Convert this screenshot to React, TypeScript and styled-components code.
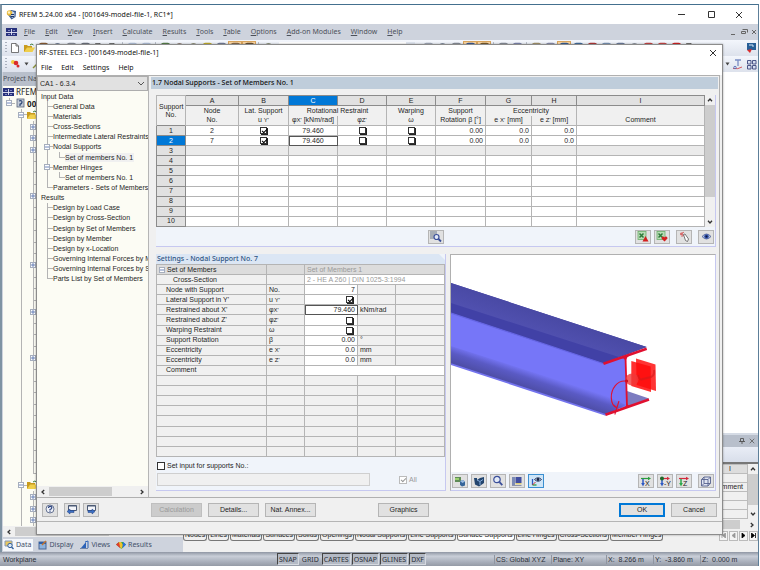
import React from "react";
import styled, { createGlobalStyle, css } from "styled-components";

const ui = '"Noto Sans", "Open Sans", sans-serif';
const small = '"Liberation Sans", Arial, sans-serif';

const Global = createGlobalStyle`
  * { box-sizing: border-box; }
  body { margin: 0; background: #fff; color: #1e1e1e; font: 7px/9px ${small}; }
  button, input, select { font: inherit; color: inherit; margin: 0; padding: 0; border-radius: 0; }
  ul { list-style: none; margin: 0; padding: 0; }
  svg { display: block; flex: none; }
`;

/* ---------- main window ---------- */

const Screen = styled.div`
  position: relative;
  display: flex;
  height: 100vh;
  padding: 4px 1px 4px 0;
  overflow: hidden;
`;
const MainWindow = styled.div`
  flex: 1;
  min-width: 0;
  display: flex;
  flex-direction: column;
  border-top: 1px solid #44708f;
  border-left: 2px solid #7f93a3;
  border-right: 1px solid #5d7f99;
`;
const TitleBar = styled.header`
  display: flex;
  align-items: center;
  height: 19px;
  padding: 0 6px 0 4px;
  gap: 2px;
  font: 7px/12px ${ui};
  color: #111;
  background: #fff;
`;
const Spacer = styled.span`
  flex: 1;
`;
const WinButton = styled.button<{ $w?: number }>`
  display: grid;
  place-items: center;
  width: ${(p) => p.$w ?? 29}px;
  height: 12px;
  border: 0;
  background: none;
  color: #333;
`;
const MenuBar = styled.nav`
  display: flex;
  align-items: center;
  height: 16px;
  padding-left: 4px;
  gap: 10px;
  font: 7px/12px ${ui};
  color: #4c5058;
  background: #ced3dd;
  & > svg:first-child { margin-right: -3px; }
`;
const MenuItem = styled.button`
  border: 0;
  background: none;
  &::first-letter { text-decoration: underline; }
`;
const ToolRow = styled.div`
  display: flex;
  align-items: center;
  height: 16px;
  padding-left: 1px;
  background: linear-gradient(#f3f6fc, #dde2ec);
  overflow: hidden;
`;
const ToolSlot = styled.button<{ $on?: boolean; $w?: number }>`
  display: grid;
  place-items: center;
  flex: none;
  width: ${(p) => p.$w ?? 14}px;
  height: 14px;
  padding: 0;
  border: 1px solid ${(p) => (p.$on ? "#d9a45c" : "transparent")};
  background: ${(p) => (p.$on ? "#fbd6a2" : "none")};
`;
const Grip = styled.span`
  flex: none;
  width: 2px;
  height: 12px;
  margin: 0 1px 0 2px;
  background: repeating-linear-gradient(#a9b0bd 0 1px, transparent 1px 3px);
`;
const Separator = styled.span`
  flex: none;
  width: 1px;
  height: 12px;
  margin: 0 2px;
  background: #b9bfca;
`;
const ToolCombo = styled.select`
  appearance: none;
  width: 136px;
  height: 12px;
  margin: 0 6px 0 4px;
  border: 0;
  border-right: 9px solid #dfe5ef;
  background: #fff;
`;
const Work = styled.div`
  flex: 1;
  min-height: 0;
  display: grid;
  grid-template-columns: 181px 1fr;
`;
const Navigator = styled.aside`
  display: flex;
  flex-direction: column;
  min-height: 0;
  padding-left: 1px;
  background: #ced3dd;
`;
const NavHeader = styled.div`
  height: 14px;
  font: 7px/14px ${ui};
  color: #4a4d55;
  background: #b8bfcb;
`;
const NavTree = styled.ul`
  flex: 1;
  min-height: 0;
  display: grid;
  grid-auto-rows: 1fr;
  background: #fcfcf4;
  font: 8px/11px ${ui};
`;
const NavRow = styled.li`
  display: flex;
  align-items: center;
  min-height: 0;
  overflow: hidden;
`;
const line = "linear-gradient(#b4b4b4,#b4b4b4)";
const Rail = styled.span<{ $dash?: boolean; $line?: boolean; $end?: boolean }>`
  display: grid;
  align-self: stretch;
  align-items: center;
  justify-items: start;
  flex: none;
  width: 12px;
  padding-left: 3px;
  background:
    ${line} 6px 50% / ${(p) => (p.$dash ? "6px 1px" : "0 0")} no-repeat,
    ${line} 6px 0 / ${(p) => (p.$line ? "1px" : "0")} ${(p) => (p.$end ? "50%" : "100%")} no-repeat;
`;
const Toggle = styled.button`
  display: grid;
  place-items: center;
  width: 6px;
  height: 6px;
  border: 1px solid #a6aebd;
  background: #fff;
`;
const NavTabs = styled.div`
  display: flex;
  align-items: center;
  height: 15px;
  gap: 4px;
  font: 7px/12px ${ui};
  color: #42506a;
`;
const NavTab = styled.button<{ $on?: boolean }>`
  display: flex;
  align-items: center;
  gap: 2px;
  height: 12px;
  padding: 0 1px;
  border: 0;
  background: ${(p) => (p.$on ? "#f4f7fb" : "none")};
`;
const Viewport = styled.main`
  min-width: 0;
  display: flex;
  flex-direction: column;
  background: #fff;
`;
const Dock = styled.section`
  margin-top: auto;
  display: flex;
  flex-direction: column;
  border-top: 2px solid #d5dbe5;
  background: #f0f0f0;
`;
const DockHeader = styled.div`
  display: flex;
  justify-content: flex-end;
  align-items: center;
  gap: 4px;
  height: 12px;
  padding-right: 3px;
  color: #555;
  background: #b8bfcb;
`;
const DockTools = styled.div`
  height: 17px;
  background: linear-gradient(#e9edf6, #d8deea);
  border-bottom: 2px solid #777;
`;
const DockSheet = styled.div`
  display: grid;
  grid-template-columns: 1fr 10px;
`;
const SheetTable = styled.table`
  width: 100%;
  border-collapse: collapse;
  background: #f0f0f0;
  th, td { height: 9px; padding: 0; border: 1px solid #bcbcbc; font-weight: 400; text-align: right; line-height: 8px; }
  th { background: #ddd; padding-right: 16px; }
  td { padding-right: 4px; }
`;
const SheetTabs = styled.div`
  display: flex;
  align-items: center;
  gap: 1px;
  height: 11px;
`;
const SheetTab = styled.button<{ $on?: boolean }>`
  height: 10px;
  padding: 0 1px;
  border: 1px solid #777;
  border-top: 0;
  border-radius: 0 0 3px 3px;
  background: ${(p) => (p.$on ? "#fff" : "#f0f0f0")};
  line-height: 8px;
  white-space: nowrap;
`;
const PageButton = styled.button`
  display: grid;
  place-items: center;
  width: 9px;
  height: 10px;
  border: 1px solid #bbb;
  background: #f4f4f4;
`;
const DockFoot = styled.div`
  height: 11px;
`;
const StatusBar = styled.footer`
  display: flex;
  align-items: center;
  height: 14px;
  margin-left: -2px;
  padding: 0 3px;
  background: linear-gradient(#8f96a3, #c9ced8 30%, #a9afbb 70%, #959ba6);
  color: #2b2f38;
`;
const StatusButtons = styled.div`
  display: flex;
  flex: 1;
  margin-left: 32%;
  gap: 1px;
`;
const StatusToggle = styled.button<{ $up?: boolean }>`
  height: 12px;
  padding: 0 1px;
  border: 1px solid;
  border-color: ${(p) => (p.$up ? "transparent" : "#444 #d5d9e0 #d5d9e0 #444")};
  background: ${(p) => (p.$up ? "none" : "#b4bac5")};
  font: 7px/9px ${ui};
`;
const StatusText = styled.span<{ $w: number }>`
  width: ${(p) => p.$w}px;
  padding-left: 1px;
  border-left: 1px solid #8f95a1;
  white-space: nowrap;
`;

/* ---------- scrollbars ---------- */

const HScroll = styled.div`
  display: grid;
  grid-template-columns: 12px 1fr 12px;
  align-items: center;
  justify-items: center;
  height: 11px;
  background: #f0f0f0;
`;
const HTrack = styled.div`
  width: 100%;
  height: 9px;
  display: flex;
`;
const HThumb = styled.div<{ $size: number }>`
  width: ${(p) => p.$size}%;
  background: #cdcdcd;
`;
const VScroll = styled.div`
  display: flex;
  flex-direction: column;
  align-items: center;
  background: #f0f0f0;
`;
const VThumb = styled.div<{ $size: number }>`
  width: 100%;
  flex: ${(p) => p.$size};
  background: #cdcdcd;
`;
const VRest = styled.div<{ $size: number }>`
  flex: ${(p) => p.$size};
`;
const ScrollArrow = styled.button`
  display: grid;
  place-items: center;
  width: 10px;
  height: 10px;
  border: 0;
  background: none;
`;

/* ---------- dialog ---------- */

const Dialog = styled.div`
  position: absolute;
  top: 44px;
  left: 36px;
  right: 37px;
  bottom: 35px;
  display: flex;
  flex-direction: column;
  border: 1px solid #8c8c8c;
  background: #f0f0f0;
  box-shadow: 0 0 2px rgba(0, 0, 0, 0.35);
`;
const DialogTitle = styled.div`
  display: flex;
  align-items: center;
  height: 15px;
  padding: 1px 0 0 2px;
  background: #fff;
  font: 7px/12px ${ui};
  color: #111;
`;
const DialogMenu = styled.nav`
  display: flex;
  align-items: center;
  height: 15px;
  padding-left: 4px;
  gap: 9px;
  background: #fff;
  font: 7px/12px ${ui};
  color: #111;
`;
const PlainItem = styled.button`
  border: 0;
  background: none;
`;
const DialogBody = styled.div`
  flex: 1;
  min-height: 0;
  display: grid;
  grid-template-columns: 112px minmax(0, 1fr);
  margin-right: 2px;
  border: 1px solid #b0b0b0;
  border-left: 0;
`;
const Side = styled.div`
  display: flex;
  flex-direction: column;
  min-width: 0;
  min-height: 0;
  border-right: 1px solid #b5b5b5;
  background: #fcfcf4;
`;
const CaseSelect = styled.select`
  appearance: none;
  width: 100%;
  height: 15px;
  padding-left: 2px;
  border: 1px solid #adadad;
  background:
    linear-gradient(45deg, transparent 45%, #555 45%, #555 58%, transparent 58%) right 6px top 5px / 3px 3px no-repeat,
    linear-gradient(-45deg, transparent 45%, #555 45%, #555 58%, transparent 58%) right 3px top 5px / 3px 3px no-repeat,
    #e1e1e1;
`;
const Tree = styled.ul`
  display: grid;
  grid-auto-rows: 1fr;
  height: 193px;
  padding-left: 4px;
  overflow: hidden;
`;
const TreeRow = styled.li`
  display: flex;
  align-items: center;
  min-height: 0;
  white-space: nowrap;
`;
const TreeLabel = styled.span<{ $on?: boolean }>`
  line-height: 9px;
  padding-right: 1px;
  background: ${(p) => (p.$on ? "#f0f0f0" : "none")};
`;
const Page = styled.div`
  display: flex;
  flex-direction: column;
  min-width: 0;
  padding: 1px 1px 6px 2px;
`;
const PageTitle = styled.h1`
  margin: 0;
  height: 12px;
  padding-left: 1px;
  font: 500 7px/12px ${ui};
  color: #111;
  background: #bfcddb;
`;
const GridPanel = styled.section`
  margin: 6px 2px 7px 5px;
  border: 1px solid #c6c8f0;
  border-width: 0 1px 1px 0;
  background: #f0f4fa;
`;
const GridWrap = styled.div`
  display: grid;
  grid-template-columns: minmax(0, 1fr) 10px;
`;
const GridTable = styled.table`
  width: 100%;
  height: 132px;
  table-layout: fixed;
  border-collapse: collapse;
  background: #fff;
  th, td {
    padding: 0 2px;
    border: 1px solid #b4b4b4;
    font-weight: 400;
    line-height: 8px;
    height: 10px;
    text-align: center;
    white-space: nowrap;
  }
  thead th { background: #f0f0f0; }
`;
const Letter = styled.th<{ $on?: boolean }>`
  && {
    background: ${(p) => (p.$on ? "#0078d7" : "#e1e1e1")};
    color: ${(p) => (p.$on ? "#fff" : "inherit")};
    border-color: #8b8b8b;
  }
`;
const Upper = styled.th`
  && { border-bottom: 0; }
`;
const Lower = styled.th`
  && { border-top: 0; padding: 0; }
`;
const RowHead = styled.th<{ $on?: boolean }>`
  && {
    background: ${(p) => (p.$on ? "#0078d7" : "#e1e1e1")};
    color: ${(p) => (p.$on ? "#fff" : "inherit")};
    border: 1px solid #8b8b8b;
  }
`;
const Cell = styled.td<{ $right?: boolean; $focus?: boolean; $dim?: boolean }>`
  && {
    ${(p) => p.$right && css`text-align: right;`}
    ${(p) => p.$dim && css`background: #ebebeb;`}
    ${(p) => p.$focus && css`outline: 1px solid #555; outline-offset: -1px;`}
  }
`;
const GridTools = styled.div`
  display: flex;
  align-items: center;
  gap: 3px;
  height: 19px;
  padding: 0 1px;
`;
const MidTools = styled.div`
  flex: 1;
  display: grid;
  place-items: center;
`;
const IconButton = styled.button<{ $on?: boolean; $gap?: number }>`
  display: grid;
  place-items: center;
  width: 16px;
  height: 14px;
  margin-left: ${(p) => p.$gap ?? 0}px;
  border: 1px solid ${(p) => (p.$on ? "#3c8fd0" : "#b5b5b5")};
  background: ${(p) => (p.$on ? "#cfe5f7" : "#e1e1e1")};
`;
const Lowers = styled.div`
  flex: 1;
  min-height: 0;
  display: grid;
  grid-template-columns: 290px minmax(0, 1fr);
  gap: 4px;
  margin: 0 2px 0 5px;
`;
const Settings = styled.section`
  display: flex;
  flex-direction: column;
  border: 1px solid #c6c8f0;
  border-width: 0 1px 1px 0;
  background: #f0f4fa;
`;
const SettingsTitle = styled.h2`
  margin: 0;
  height: 10px;
  padding-left: 1px;
  font: 500 7px/10px ${ui};
  color: #2d5382;
  background: #dbe6f4;
  clip-path: polygon(0 0, calc(100% - 6px) 0, 100% 6px, 100% 100%, 0 100%);
`;
const PropTable = styled.table`
  width: 100%;
  height: 193px;
  table-layout: fixed;
  border-collapse: collapse;
  background: #f0f0f0;
  td, th {
    height: 10px;
    padding: 0 2px;
    border: 1px solid #b4b4b4;
    font-weight: 400;
    line-height: 8px;
    text-align: left;
    white-space: nowrap;
  }
  th { padding-left: 9px; }
`;
const PropHead = styled.th`
  && { padding-left: 2px; background: #dcdcdc; }
`;
const HeadRest = styled.td`
  && { background: #dcdcdc; color: #9a9a9a; }
`;
const SubHead = styled.th`
  && { padding-left: 16px; }
`;
const Value = styled.td<{ $gray?: boolean; $left?: boolean; $focus?: boolean }>`
  && {
    background: #fff;
    text-align: ${(p) => (p.$left ? "left" : "right")};
    color: ${(p) => (p.$gray ? "#9a9a9a" : "inherit")};
    ${(p) => p.$focus && css`outline: 1px solid #555; outline-offset: -1px;`}
  }
`;
const Folded = styled.span`
  display: flex;
  align-items: center;
  gap: 2px;
`;
const SetInput = styled.div`
  display: flex;
  flex-direction: column;
  gap: 3px;
  padding: 4px 0 0 1px;
`;
const InputRow = styled.div`
  display: flex;
  align-items: center;
`;
const CheckLabel = styled.label<{ $gray?: boolean; $gap?: number }>`
  display: flex;
  align-items: center;
  gap: 2px;
  margin-left: ${(p) => p.$gap ?? 0}px;
  color: ${(p) => (p.$gray ? "#9a9a9a" : "inherit")};
`;
const NumberField = styled.input`
  width: 213px;
  height: 13px;
  border: 1px solid #cfcfcf;
  background: #f0f0f0;
`;
const Box = styled.input<{ $cell?: "center" | "right"; $gray?: boolean }>`
  appearance: none;
  display: block;
  width: 8px;
  height: 8px;
  border: 1px solid ${(p) => (p.$gray ? "#bbb" : "#333")};
  background: #fff;
  ${(p) =>
    p.$cell &&
    css`
      width: 7px;
      height: 7px;
      box-shadow: 1px 1px 0 #222;
      margin: 0 ${p.$cell === "right" ? "2px" : "auto"} 0 auto;
    `}
  &:checked::after {
    content: "";
    display: block;
    width: 4px;
    height: 2px;
    margin: 1px 0 0 1px;
    border: solid ${(p) => (p.$gray ? "#999" : "#000")};
    border-width: 0 0 1px 1px;
    transform: rotate(-45deg);
  }
`;
const Sub = styled.span`
  font-size: 6px;
`;
const Preview = styled.section`
  display: flex;
  flex-direction: column;
  border: 1px solid #c6c8f0;
  border-top-color: #b0b0b0;
  border-left-color: #b0b0b0;
  background: #fff;
  svg.beam { flex: 1; width: 100%; min-height: 0; }
`;
const PreviewTools = styled.div`
  display: flex;
  align-items: center;
  gap: 3px;
  height: 18px;
  padding: 0 1px;
  background: #f0f4fa;
`;
const Footer = styled.div`
  display: flex;
  align-items: center;
  height: 24px;
  padding: 0 5px;
  border-bottom: 1px solid #b5b5b5;
`;
const HelpButtons = styled.div`
  display: flex;
  gap: 3px;
  width: 109px;
`;
const PushButton = styled.button<{ $w?: number; $gap?: number; $primary?: boolean }>`
  width: ${(p) => p.$w ?? 51}px;
  height: 14px;
  margin-left: ${(p) => p.$gap ?? 6}px;
  border: ${(p) => (p.$primary ? "2px solid #0078d7" : "1px solid #b5b5b5")};
  background: #e1e1e1;
  line-height: 9px;
  &:disabled { color: #9a9a9a; background: #ccc; border-color: #bfbfbf; }
`;
const DialogStatus = styled.div`
  height: 12px;
`;

/* ---------- drawings ---------- */

const Chevron = ({ d }: { d: string }) => (
  <svg width="6" height="6" viewBox="0 0 6 6" fill="none" stroke="#333" strokeWidth="1.3"><path d={d} /></svg>
);
const LEFT = "M4.2 1 2 3l2.200 2";
const RIGHT = "M1.800 1 4 3 1.800 5";
const UP = "M1 4.200 3 2l2 2.200";
const DOWN = "M1 1.800 3 4l2-2.200";

const Cross = ({ s = 8, c = "#333" }: { s?: number; c?: string }) => (
  <svg width={s} height={s} viewBox="0 0 8 8" stroke={c} strokeWidth="1"><path d="M1 1l6 6M7 1 1 7" /></svg>
);
const Logo = () => (
  <svg width="11" height="11" viewBox="0 0 11 11">
    <path d="M1 4.500 5 1l5 1-.5 6-4 2.500z" fill="#38598f" />
    <path d="M3 3.500 6 2l2.500 1.500v4L6 9z" fill="#c7d4e8" />
    <circle cx="3.500" cy="4" r="2.700" fill="#e6b93c" /><circle cx="3" cy="3.500" r="1.200" fill="#fff3bd" />
    <path d="M5 5.500h3M5 7.500h3" stroke="#1f3566" strokeWidth="1" />
  </svg>
);
const Flag = () => (
  <svg width="11" height="8" viewBox="0 0 11 8">
    <rect width="11" height="8" fill="#27317c" />
    <path d="M0 4.500h11M5.500 1v6" stroke="#e5e8f5" strokeWidth=".9" />
    <path d="M2 2.500h2M7 2.500h2M2 6.500h2M7 6.500h2" stroke="#aab2dc" strokeWidth=".7" />
  </svg>
);
const Folder = () => (
  <svg width="11" height="10" viewBox="0 0 11 10">
    <path d="M0 9V2h3l1 1h4v2" fill="#c99b1e" /><path d="M0 9 3 4.500h8L8.500 9z" fill="#efcf4d" />
    <path d="M6 2q2-2 3.500 0" stroke="#3a7a3a" fill="none" />
  </svg>
);
const PageIcon = ({ c = "#fff" }: { c?: string }) => (
  <svg width="10" height="12" viewBox="0 0 10 12"><path d="M1.500 1.500h4.500l2.500 2.500v6.500h-7z" fill={c} stroke="#555" strokeWidth=".8" /><path d="M6 1.500V4h2.500" fill="none" stroke="#555" strokeWidth=".8" /></svg>
);
const Blob = ({ c }: { c: string }) => (
  <svg width="11" height="12" viewBox="0 0 11 12"><rect x="1.500" y="1.500" width="8" height="8" rx="2" fill="none" stroke={c} strokeWidth="1.500" /><path d="M3 4h5M3 6.500h5" stroke={c} /></svg>
);
const Disc = ({ c }: { c: string }) => (
  <svg width="11" height="12" viewBox="0 0 11 12"><circle cx="5.500" cy="5.500" r="4" fill={c} stroke="#56606e" strokeWidth=".7" /></svg>
);
const Nodes = () => (
  <svg width="11" height="10" viewBox="0 0 11 10"><circle cx="3" cy="3" r="2" fill="#f3cb3c" /><circle cx="6" cy="4" r="2.300" fill="#d92c2c" /><circle cx="8" cy="7" r="1.500" fill="#d92c2c" /></svg>
);
const Wand = () => (
  <svg width="11" height="10" viewBox="0 0 11 10"><path d="M1 9 7 3" stroke="#8a8f3a" strokeWidth="1.500" /><path d="M5 1l4 4M9 1 6 4" stroke="#c7bf31" /></svg>
);
const Caret = () => (
  <svg width="5" height="4" viewBox="0 0 5 4"><path d="M.5.5h4L2.500 3.500z" fill="#444" /></svg>
);
const BeamTool = () => (
  <svg width="11" height="11" viewBox="0 0 11 11" fill="none"><path d="M3 1h6M6 1v6" stroke="#7a8dc4" strokeWidth="1.300" /><path d="M1 9.500q5 1 9-1.500" stroke="#d4585f" /><circle cx="3" cy="8.500" r="1.200" stroke="#5b71bb" /></svg>
);
const WindowsTool = () => (
  <svg width="11" height="11" viewBox="0 0 11 11" fill="#d7def0" stroke="#4c5788"><path d="M1.500 1.500h3.500v3.500H1.500zM6.500 1.500H10v3.500H6.500zM1.500 6.500h3.500V10H1.500zM6.500 6.500H10V10H6.500z" /></svg>
);
const BlueTool = () => (
  <svg width="11" height="12" viewBox="0 0 11 12"><rect x="1" y="1" width="9" height="7" fill="#265e96" /><path d="M3 3h4v2" stroke="#cfe3f5" fill="none" /><path d="M1 8l3 3 2-4z" fill="#d92c2c" /></svg>
);
const Model = () => (
  <svg width="10" height="10" viewBox="0 0 10 10"><rect x="2" y="1" width="7" height="8" fill="#c3cbd8" stroke="#59647a" strokeWidth=".8" /><path d="M4 3q3-1 3 1t-2 2v2" stroke="#2d4675" fill="none" strokeWidth="1.200" /></svg>
);
const TabIcon = ({ kind }: { kind: string }) => (
  <svg width="10" height="10" viewBox="0 0 10 10" fill="none">
    {kind === "Data" && <><path d="M1 1h7v5H1z" fill="#e8c860" stroke="#8497b5" /><circle cx="6" cy="5.500" r="2.200" fill="#d7e6f5" stroke="#36629c" /><path d="m7.500 7 2 2" stroke="#36629c" strokeWidth="1.400" /></>}
    {kind === "Display" && <><rect x="1" y="2" width="7" height="7" fill="#8eb3dd" stroke="#4a6795" /><path d="M1 3h7" stroke="#2f60a8" strokeWidth="2" /><path d="m4 5 4-4" stroke="#c7752c" strokeWidth="1.500" /></>}
    {kind === "Views" && <><path d="M1 8.500h8" stroke="#7285a8" /><path d="m2 8 5-6v6z" fill="#2c62b8" /><path d="m6 2 3-1v7" stroke="#2c62b8" /></>}
    {kind === "Results" && <><path d="M0 4.500 3 2l4 0 3 2.500L5.500 9z" fill="#34a853" /><path d="M0 4.500 3 2l2 2.500L4 8z" fill="#e33a2c" /><path d="M3 2h2l2 3-1.500 4L4 7z" fill="#f1c22c" /><path d="m7 2 3 2.500L6.500 8z" fill="#2b6de0" /></>}
  </svg>
);
const Excel = ({ up }: { up?: boolean }) => (
  <svg width="12" height="11" viewBox="0 0 12 11">
    <rect x="1" y=".5" width="8" height="8" fill="#b9dcb6" stroke="#6bae6c" strokeWidth=".8" /><path d="m2.500 2.500 4 4M6.500 2.500l-4 4" stroke="#2f7a3a" strokeWidth="1.500" />
    <path d={up ? "M5.500 10.500h6L8.500 5z" : "M8.500 10.500 5.500 7.500q0-2 1.500-2 1 0 1.500 1 .5-1 1.500-1 1.500 0 1.500 2z"} fill="#d41f1f" />
  </svg>
);
const Pick = () => (
  <svg width="11" height="11" viewBox="0 0 11 11" fill="none"><path d="M3 1v5M1 2l4 3M5 1 1 4" stroke="#d34a4a" strokeWidth=".8" /><path d="m4.500 3.500 1.500-.5 3.500 5-1 2.500-2-1z" fill="#fff" stroke="#555" strokeWidth=".8" /></svg>
);
const EyeIcon = () => (
  <svg width="11" height="9" viewBox="0 0 11 9"><path d="M1 4.500q4.500-5 9 0-4.500 5-9 0z" fill="#b8c7e6" stroke="#3c4f88" strokeWidth=".7" /><circle cx="5.500" cy="4.500" r="2.300" fill="#2f4ea6" /><circle cx="5.500" cy="4.500" r="1" fill="#0b1538" /></svg>
);
const Lens = ({ boxed }: { boxed?: boolean }) => (
  <svg width="12" height="12" viewBox="0 0 12 12" fill="none">
    {boxed && <path d="M0 0h7v8H0z" fill="#a7adb5" />}
    <circle cx={boxed ? 6.5 : 5} cy={boxed ? 6 : 4.5} r={boxed ? 2.5 : 3.2} fill="#e3eaf7" stroke="#3a4f9a" strokeWidth="1.200" />
    <path d={boxed ? "m8.500 8 2.500 2.500" : "m7.500 7.200 2.800 3"} stroke="#3a4f9a" strokeWidth="1.800" />
  </svg>
);
const Shade = () => (
  <svg width="12" height="11" viewBox="0 0 12 11"><path d="M1 1h6v5H1z" fill="#5f8c57" /><path d="M1 2h4v2H1z" fill="#9bd06f" /><path d="m6 5 3-1 2 1.500v4L8 10.500 6 9z" fill="#35659a" /><path d="m6 5 3-1 2 1.500L8.500 7z" fill="#9bbce0" /></svg>
);
const Solid = () => (
  <svg width="12" height="11" viewBox="0 0 12 11"><path d="M1 2h3v2l3-2 4-1v6L6 10.500 2 8.500z" fill="#23456f" /><path d="m4 4 3 1.500L10 3.500M7 5.500V9" stroke="#87aede" fill="none" /></svg>
);
const Panes = () => (
  <svg width="12" height="11" viewBox="0 0 12 11"><path d="M1 1h3v8H1z" fill="#7c8bb5" /><path d="M4.500 1h6v6h-6z" fill="#414fa0" /><path d="M4.500 7.800h6" stroke="#d9c24b" /><path d="M1 9.500h9.500" stroke="#8a93ad" /></svg>
);
const AxesEye = () => (
  <svg width="12" height="11" viewBox="0 0 12 11" fill="none"><path d="M2.500 3v6" stroke="#2b58c4" strokeWidth="1.300" /><path d="M2.500 9h4" stroke="#2a9d3f" strokeWidth="1.300" /><path d="m2.500 9 3-3" stroke="#d33" /><path d="M4.500 3.500q3.500-3.500 7 0-3.500 3.500-7 0z" fill="#cfd9ee" stroke="#2f3f66" /><circle cx="8" cy="3.500" r="1.400" fill="#16233f" /></svg>
);
const AxisX = ({ a, v, c, h, n }: { a?: boolean; v: string; c?: string; h: string; n: string }) => (
  <svg width="12" height="11" viewBox="0 0 12 11" fill="none">
    <path d="M1 2.500h8" stroke={h} strokeWidth="1.200" /><path d="m8 .8 3 1.700-3 1.700z" fill={h} />
    <path d="M3 3v5" stroke={v} strokeWidth="1.500" /><path d="M1.200 7 3 10.500 4.800 7z" fill={v} />
    {a && <circle cx="3" cy="2.500" r="2" fill={c} />}
    <text x="5" y="10" fontFamily="Liberation Sans" fontSize="7" fill="#222">{n}</text>
  </svg>
);
const Cube = () => (
  <svg width="12" height="11" viewBox="0 0 12 11" fill="#dfe4f2" stroke="#56628e" strokeWidth=".9"><path d="M1.500 3.500 4 1h6.500v6L8 10H1.500zM1.500 3.500H8V10M8 3.500 10.500 1M4 1v6.500h6.500M4 7.500 1.500 10" /></svg>
);
const Help = () => (
  <svg width="12" height="11" viewBox="0 0 12 11" fill="none"><circle cx="6" cy="5" r="4" fill="#eef1f8" stroke="#6a7694" /><path d="M4.500 4q0-1.700 1.700-1.700T7.800 4Q7.600 5 6 5.500v1M6 7.300v1" stroke="#2c4380" strokeWidth="1.200" /></svg>
);
const Step = ({ back }: { back?: boolean }) => (
  <svg width="12" height="11" viewBox="0 0 12 11" fill="none"><path d="M2.500 1.500h8v5h-8z" fill="#f3f5fa" stroke="#4c5a75" /><path d="M2.500 2h8" stroke="#4c5a75" /><path d={back ? "M1 7.500 4 5v1.500h4v2H4V10z" : "M10 7.500 7 5v1.500H3v2h4V10z"} fill="#3c6fc4" stroke="#1e3f80" strokeWidth=".5" /></svg>
);

const Beam = () => (
  <svg className="beam" viewBox="0 0 264 217" preserveAspectRatio="xMinYMid meet" role="img" aria-label="Beam with nodal support">
    <defs>
      <linearGradient id="foot" gradientUnits="userSpaceOnUse" x1="80" y1="116" x2="73" y2="137">
        <stop offset="0" stopColor="#7676f6" /><stop offset=".35" stopColor="#5a5ac4" /><stop offset="1" stopColor="#484898" />
      </linearGradient>
      <linearGradient id="roof" gradientUnits="userSpaceOnUse" x1="100" y1="60" x2="92" y2="84">
        <stop offset="0" stopColor="#4949a4" /><stop offset="1" stopColor="#5252b2" />
      </linearGradient>
    </defs>
    <path d="M176 136 198 143.500 176 152z" fill="#7c7cc0" />
    <path d="M0 56 153 106 174 101.500 176 152 154 156 0 106z" fill="#7676f8" />
    <path d="M0 91 154 140 175 150 155 160 0 109z" fill="url(#foot)" />
    <path d="M0 109 155 160" stroke="#7373ee" strokeWidth="1.800" />
    <path d="M0 28 195.700 92 152.500 108.500 0 58z" fill="#4141a6" />
    <path d="M0 28 195.700 92 168 102 0 48z" fill="url(#roof)" />
    <path d="M0 58 152 108.500" stroke="#6666e4" strokeWidth="1.200" />
    <path d="M152.500 108.700 195.700 93.700M154.500 159.800 198 144.500" stroke="#e01030" strokeWidth="2.600" />
    <path d="M174.500 101.500 176 152" stroke="#e01030" strokeWidth="1.800" />
    <path d="M170 103.500q4-1 4.500 4 .5-6 6-8zM170.500 153.500q5-1 5.500-5 1 3 5 1.500z" fill="#e01030" />
    <path d="m185 103.500 19.500 6L205 136l-19.300-6z" fill="#ff1010" opacity=".85" />
    <path d="m180.300 106 19.400 5.500.3 25.500-19.700-6z" fill="#ff0c0c" opacity=".85" />
    <path d="M187 120q1 6 5 4l8-2q4-2 3-7" fill="none" stroke="#d21b1b" strokeWidth="2" opacity=".6" />
    <ellipse cx="181" cy="124.500" rx="6.500" ry="6" fill="#f03838" opacity=".8" />
    <circle cx="175.500" cy="126" r="1.600" fill="#c80a1c" />
    <path d="M176 126.300c-10-2-16 8-15.700 16.500.2 5 2.500 9 5.500 10M168 146l-4.200 13.500M162.500 150l3.300 3" fill="none" stroke="#e01030" strokeWidth="1.100" />
  </svg>
);

/* ---------- content ---------- */

type Node = { t: string; level: 0 | 1 | 2; open?: boolean; end?: boolean; on?: boolean };
const tree: Node[] = [
  { t: "Input Data", level: 0 },
  { t: "General Data", level: 1 },
  { t: "Materials", level: 1 },
  { t: "Cross-Sections", level: 1 },
  { t: "Intermediate Lateral Restraints", level: 1 },
  { t: "Nodal Supports", level: 1, open: true },
  { t: "Set of members No. 1", level: 2, on: true },
  { t: "Member Hinges", level: 1, open: true },
  { t: "Set of members No. 1", level: 2 },
  { t: "Parameters - Sets of Members", level: 1, end: true },
  { t: "Results", level: 0 },
  { t: "Design by Load Case", level: 1 },
  { t: "Design by Cross-Section", level: 1 },
  { t: "Design by Set of Members", level: 1 },
  { t: "Design by Member", level: 1 },
  { t: "Design by x-Location", level: 1 },
  { t: "Governing Internal Forces by Member", level: 1 },
  { t: "Governing Internal Forces by Set of Members", level: 1 },
  { t: "Parts List by Set of Members", level: 1, end: true },
];

const ToggleBox = ({ plus, label }: { plus?: boolean; label: string }) => (
  <Toggle aria-label={label}>
    <svg width="4" height="4" viewBox="0 0 4 4" stroke="#4a68a8" strokeWidth=".8"><path d={plus ? "M0 2h4M2 0v4" : "M0 2h4"} /></svg>
  </Toggle>
);

const ProjectTree = () => {
  const plus = [0, 1, 2, 6, 12, 16, 20];
  return (
    <NavTree>
      <NavRow><Flag />&nbsp;RFEM</NavRow>
      <NavRow><Rail $dash $line $end><ToggleBox label="Collapse" /></Rail><Model />&nbsp;<b>001649-model-file-1</b></NavRow>
      <NavRow><Rail /><Rail $dash $line><ToggleBox label="Collapse" /></Rail><Folder /></NavRow>
      {Array.from({ length: 31 }, (_, i) => (
        <NavRow key={i}>
          <Rail /><Rail $line /><Rail $dash $line $end={i === 30}>{plus.includes(i) && <ToggleBox plus label="Expand" />}</Rail>
        </NavRow>
      ))}
      <NavRow><Rail /><Rail $dash $line><ToggleBox label="Collapse" /></Rail><Folder /></NavRow>
      {[0, 1, 2].map((i) => (
        <NavRow key={i}><Rail /><Rail $line /><Rail $dash $line><ToggleBox plus label="Expand" /></Rail></NavRow>
      ))}
    </NavTree>
  );
};

const tools: (string | [string, string])[] = [
  ["page", "#fff"], ["folder", ""], ["blob", "#8b5e34"], ["disc", "#4667a5"], ["blob", "#8b909b"], ["blob", "#6f7480"], ["page", "#e8ebf2"], ["page", "#e8ebf2"],
  "|", ["blob", "#b4c4dd"], ["blob", "#b4c4dd"], "|", ["blob", "#59824c"], ["disc", "#e07b2c"], ["disc", "#e8cf3d"], ["blob", "#c5b12d"], ["blob", "#76809b"],
  ["on", "#8c6d4c"], ["on", "#6a5032"], "|", ["disc", "#cfd33c"], "combo", ["blob", "#a4abba"], ["disc", "#a9c0e0"], ["blob", "#8c919b"],
  ["on", "#3a5a96"], ["on", "#7a5b2b"], "|", ["blob", "#8b909b"], ["blob", "#8088b0"], "|", ["blob", "#a7976f"], ["blob", "#8b8fae"], ["on", "#375f96"], ["blob", "#456f9f"],
  ["blob", "#b33a3a"], ["blob", "#7b96b7"], ["blob", "#6f7f9f"], ["disc", "#d5d8de"], ["blob", "#c84747"], ["blob", "#c84747"], ["blob", "#d32424"], ["page", "#e7dfc2"],
];

const phi = (n: string) => <>φ<Sub>{n}'</Sub></>;

const Grid = () => (
  <GridTable>
    <colgroup>
      {[29, 53, 50, 49, 49, 49, 50, 46, 45].map((w, i) => <col key={i} width={w} />)}<col />
    </colgroup>
    <thead>
      <tr>
        <Upper rowSpan={3} scope="col">Support<br />No.</Upper>
        {"ABCDEFGHI".split("").map((l) => <Letter key={l} $on={l === "C"}>{l}</Letter>)}
      </tr>
      <tr>
        <Upper>Node</Upper><Upper>Lat. Support</Upper><Upper colSpan={2}>Rotational Restraint</Upper>
        <Upper>Warping</Upper><Upper>Support</Upper><Upper colSpan={2}>Eccentricity</Upper><Upper />
      </tr>
      <tr>
        <Lower>No.</Lower><Lower>u <Sub>Y'</Sub></Lower><Lower>{phi("X")} [kNm/rad]</Lower><Lower>{phi("Z")}</Lower>
        <Lower>ω</Lower><Lower>Rotation β [°]</Lower><Lower>e <Sub>X'</Sub> [mm]</Lower><Lower>e <Sub>Z'</Sub> [mm]</Lower><Lower>Comment</Lower>
      </tr>
    </thead>
    <tbody>
      {[2, 7].map((n, i) => (
        <tr key={n}>
          <RowHead $on={i === 1}>{i + 1}</RowHead>
          <Cell>{n}</Cell>
          <Cell><Box type="checkbox" $cell="center" defaultChecked aria-label={`Lateral support, node ${n}`} /></Cell>
          <Cell $focus={i === 1}>79.460</Cell>
          <Cell><Box type="checkbox" $cell="center" aria-label={`Restraint about Z, node ${n}`} /></Cell>
          <Cell><Box type="checkbox" $cell="center" aria-label={`Warping, node ${n}`} /></Cell>
          <Cell $right>0.00</Cell><Cell $right>0.0</Cell><Cell $right>0.0</Cell><Cell />
        </tr>
      ))}
      {[3, 4, 5, 6, 7, 8, 9, 10].map((n) => (
        <tr key={n}>
          <RowHead>{n}</RowHead>
          {Array.from({ length: 9 }, (_, i) => <Cell key={i} $dim={n === 3} />)}
        </tr>
      ))}
    </tbody>
  </GridTable>
);

const Props = () => (
  <PropTable>
    <colgroup><col width="110" /><col width="38" /><col width="53" /><col width="38" /><col /></colgroup>
    <tbody>
      <tr>
        <PropHead><Folded><ToggleBox label="Collapse" />Set of Members</Folded></PropHead>
        <HeadRest /><HeadRest colSpan={3}>Set of Members 1</HeadRest>
      </tr>
      <tr><SubHead>Cross-Section</SubHead><td /><Value colSpan={3} $left $gray>2 - HE A 260 | DIN 1025-3:1994</Value></tr>
      <tr><th>Node with Support</th><td>No.</td><Value>7</Value><td /><td /></tr>
      <tr><th>Lateral Support in Y'</th><td>u <Sub>Y'</Sub></td><Value><Box type="checkbox" defaultChecked $cell="right" aria-label="Lateral Support in Y'" /></Value><td /><td /></tr>
      <tr><th>Restrained about X'</th><td>{phi("X")}</td><Value $focus>79.460</Value><td>kNm/rad</td><td /></tr>
      <tr><th>Restrained about Z'</th><td>{phi("Z")}</td><Value><Box type="checkbox" $cell="right" aria-label="Restrained about Z'" /></Value><td /><td /></tr>
      <tr><th>Warping Restraint</th><td>ω</td><Value><Box type="checkbox" $cell="right" aria-label="Warping Restraint" /></Value><td /><td /></tr>
      <tr><th>Support Rotation</th><td>β</td><Value>0.00</Value><td>°</td><td /></tr>
      <tr><th>Eccentricity</th><td>e <Sub>X'</Sub></td><Value>0.0</Value><td>mm</td><td /></tr>
      <tr><th>Eccentricity</th><td>e <Sub>Z'</Sub></td><Value>0.0</Value><td>mm</td><td /></tr>
      <tr><th>Comment</th><td /><Value colSpan={3} /></tr>
      {Array.from({ length: 8 }, (_, i) => <tr key={i}><td /><td /><td /><td /><td /></tr>)}
    </tbody>
  </PropTable>
);

export default function App() {
  return (
    <Screen>
      <Global />
      <MainWindow>
        <TitleBar>
          <Logo />RFEM 5.24.00 x64 - [001649-model-file-1, RC1*]<Spacer />
          <WinButton aria-label="Minimize"><svg width="7" height="7" viewBox="0 0 7 7" stroke="#333"><path d="M0 3.500h7" /></svg></WinButton>
          <WinButton aria-label="Maximize" $w={26}><svg width="7" height="7" viewBox="0 0 7 7" stroke="#333" fill="none"><path d="M.5.5h6v6h-6z" /></svg></WinButton>
          <WinButton aria-label="Close" $w={26}><Cross /></WinButton>
        </TitleBar>
        <MenuBar>
          <Flag />
          {["File", "Edit", "View", "Insert", "Calculate", "Results", "Tools", "Table", "Options", "Add-on Modules", "Window", "Help"].map((m) => <MenuItem key={m}>{m}</MenuItem>)}
          <Spacer />
          <svg width="28" height="8" viewBox="0 0 28 8" fill="none" stroke="#666"><path d="M1 6.500h4M11.500 3.500h4v2h-4zM12.500 1.500h5v3M22 2l4 4M26 2l-4 4" /></svg>
        </MenuBar>
        <ToolRow>
          <Grip />
          {tools.map((t, i) => {
            if (t === "|") return <Separator key={i} />;
            if (t === "combo") return <ToolCombo key={i} aria-label="Load case" />;
            const [kind, c] = t as [string, string];
            return (
              <ToolSlot key={i} $on={kind === "on"} aria-label={`Tool ${i + 1}`}>
                {kind === "page" ? <PageIcon c={c} /> : kind === "folder" ? <Folder /> : kind === "disc" ? <Disc c={c} /> : <Blob c={c} />}
              </ToolSlot>
            );
          })}
          <Spacer />
          <ToolSlot aria-label="Results navigator"><BlueTool /></ToolSlot>
        </ToolRow>
        <ToolRow>
          <Grip />
          <ToolSlot aria-label="Nodes"><Nodes /></ToolSlot>
          <ToolSlot $w={8} aria-label="More nodes"><Caret /></ToolSlot>
          <ToolSlot aria-label="Wand"><Wand /></ToolSlot>
          <Spacer />
          <ToolSlot $w={6} aria-label="More views"><Caret /></ToolSlot>
          <ToolSlot aria-label="Beam"><BeamTool /></ToolSlot>
          <ToolSlot aria-label="Windows"><WindowsTool /></ToolSlot>
        </ToolRow>
        <Work>
          <Navigator>
            <NavHeader>Project Navigator - Data</NavHeader>
            <ProjectTree />
            <HScroll><Chevron d={LEFT} /><HTrack><HThumb $size={60} /></HTrack><Chevron d={RIGHT} /></HScroll>
            <NavTabs>
              {["Data", "Display", "Views", "Results"].map((t) => <NavTab key={t} $on={t === "Data"}><TabIcon kind={t} />{t}</NavTab>)}
            </NavTabs>
          </Navigator>
          <Viewport>
            <Dock>
              <DockHeader>
                <svg width="6" height="6" viewBox="0 0 6 6" fill="none" stroke="#555" strokeWidth=".9"><path d="M1.500.5h3v3h-3zM0 3.500h6M3 3.500V6" /></svg>
                <Cross s={6} c="#555" />
              </DockHeader>
              <DockTools />
              <DockSheet>
                <SheetTable>
                  <thead><tr><th>I</th></tr></thead>
                  <tbody><tr><td /></tr><tr><td>Comment</td></tr><tr><td /></tr><tr><td /></tr><tr><td /></tr></tbody>
                </SheetTable>
                <VScroll>
                  <ScrollArrow aria-label="Scroll up"><Chevron d={UP} /></ScrollArrow>
                  <VThumb $size={8} /><VRest $size={1} />
                  <ScrollArrow aria-label="Scroll down"><Chevron d={DOWN} /></ScrollArrow>
                </VScroll>
              </DockSheet>
              <HScroll><Chevron d={LEFT} /><HTrack><HThumb $size={99} /></HTrack><Chevron d={RIGHT} /></HScroll>
              <SheetTabs>
                {["Nodes", "Lines", "Materials", "Surfaces", "Solids", "Openings", "Nodal Supports", "Line Supports", "Surface Supports", "Line Hinges", "Cross-Sections", "Member Hinges"].map((t) => (
                  <SheetTab key={t} $on={t === "Surface Supports"}>{t}</SheetTab>
                ))}
                <Spacer />
                {["M1 0v5M4.500 0v5L1.500 2.500z", "M4 0v5L1 2.500z", "M1 0v5l3-2.500z", "M4.500 0v5M.5 0v5l3-2.500z"].map((d, i) => (
                  <PageButton key={d} aria-label={`Page ${i + 1}`}><svg width="5" height="5" viewBox="0 0 5 5" fill={i < 2 ? "#999" : "#000"} stroke={i < 2 ? "#999" : "#000"} strokeWidth=".8"><path d={d} /></svg></PageButton>
                ))}
              </SheetTabs>
              <DockFoot />
            </Dock>
          </Viewport>
        </Work>
        <StatusBar>
          Workplane
          <StatusButtons>
            {["SNAP", "GRID", "CARTES", "OSNAP", "GLINES", "DXF"].map((t) => <StatusToggle key={t} $up={t === "GRID"}>{t}</StatusToggle>)}
          </StatusButtons>
          <StatusText $w={57}>CS: Global XYZ</StatusText>
          <StatusText $w={55}>Plane: XY</StatusText>
          <StatusText $w={47}>X: &nbsp;8.266 m</StatusText>
          <StatusText $w={47}>Y: &nbsp;-3.860 m</StatusText>
          <StatusText $w={55}>Z: &nbsp;0.000 m</StatusText>
        </StatusBar>
      </MainWindow>

      <Dialog role="dialog" aria-label="RF-STEEL EC3">
        <DialogTitle>RF-STEEL EC3 - [001649-model-file-1]<Spacer /><WinButton $w={18} aria-label="Close dialog"><Cross /></WinButton></DialogTitle>
        <DialogMenu>{["File", "Edit", "Settings", "Help"].map((m) => <PlainItem key={m}>{m}</PlainItem>)}</DialogMenu>
        <DialogBody>
          <Side>
            <CaseSelect aria-label="Design case"><option>CA1 - 6.3.4</option></CaseSelect>
            <Tree>
              {tree.map((n, i) => (
                <TreeRow key={i}>
                  {n.level > 0 && <Rail $line $dash={n.level === 1} $end={n.end}>{n.open && <ToggleBox label={`Collapse ${n.t}`} />}</Rail>}
                  {n.level === 2 && <Rail $line $dash $end />}
                  <TreeLabel $on={n.on}>{n.t}</TreeLabel>
                </TreeRow>
              ))}
            </Tree>
            <Spacer />
            <HScroll><Chevron d={LEFT} /><HTrack><HThumb $size={72} /></HTrack><Chevron d={RIGHT} /></HScroll>
          </Side>
          <Page>
            <PageTitle>1.7 Nodal Supports - Set of Members No. 1</PageTitle>
            <GridPanel>
              <GridWrap>
                <Grid />
                <VScroll>
                  <ScrollArrow aria-label="Scroll up"><Chevron d={UP} /></ScrollArrow>
                  <VThumb $size={9} /><VRest $size={2} />
                  <ScrollArrow aria-label="Scroll down"><Chevron d={DOWN} /></ScrollArrow>
                </VScroll>
              </GridWrap>
              <GridTools>
                <MidTools><IconButton $gap={82} aria-label="Find"><Lens boxed /></IconButton></MidTools>
                <IconButton aria-label="Export"><Excel up /></IconButton>
                <IconButton aria-label="Import"><Excel /></IconButton>
                <IconButton $gap={3} aria-label="Pick"><Pick /></IconButton>
                <IconButton $gap={3} aria-label="View"><EyeIcon /></IconButton>
              </GridTools>
            </GridPanel>
            <Lowers>
              <Settings>
                <SettingsTitle>Settings - Nodal Support No. 7</SettingsTitle>
                <Props />
                <SetInput>
                  <CheckLabel><Box type="checkbox" />Set input for supports No.:</CheckLabel>
                  <InputRow>
                    <NumberField disabled aria-label="Support numbers" />
                    <CheckLabel $gray $gap={29}><Box type="checkbox" $gray disabled defaultChecked />All</CheckLabel>
                  </InputRow>
                </SetInput>
              </Settings>
              <Preview>
                <Beam />
                <PreviewTools>
                  <IconButton aria-label="Shading"><Shade /></IconButton>
                  <IconButton aria-label="Solid"><Solid /></IconButton>
                  <IconButton aria-label="Zoom"><Lens /></IconButton>
                  <IconButton aria-label="Panes"><Panes /></IconButton>
                  <IconButton $on aria-label="Show axes"><AxesEye /></IconButton>
                  <Spacer />
                  <IconButton aria-label="View X"><AxisX v="#2b58c4" h="#2a9d3f" n="X" /></IconButton>
                  <IconButton aria-label="View -Y"><AxisX a v="#2b58c4" c="#1d6b2c" h="#d42a3c" n="-Y" /></IconButton>
                  <IconButton aria-label="View Z"><AxisX v="#2aa84a" h="#d42a3c" n="Z" /></IconButton>
                  <IconButton $gap={3} aria-label="Isometric"><Cube /></IconButton>
                </PreviewTools>
              </Preview>
            </Lowers>
          </Page>
        </DialogBody>
        <Footer>
          <HelpButtons>
            <IconButton aria-label="Help"><Help /></IconButton>
            <IconButton $gap={3} aria-label="Previous"><Step back /></IconButton>
            <IconButton aria-label="Next"><Step /></IconButton>
          </HelpButtons>
          <PushButton disabled $gap={0}>Calculation</PushButton>
          <PushButton>Details...</PushButton>
          <PushButton>Nat. Annex...</PushButton>
          <PushButton $gap={62}>Graphics</PushButton>
          <Spacer />
          <PushButton $primary $w={46}>OK</PushButton>
          <PushButton $w={46}>Cancel</PushButton>
        </Footer>
        <DialogStatus />
      </Dialog>
    </Screen>
  );
}
